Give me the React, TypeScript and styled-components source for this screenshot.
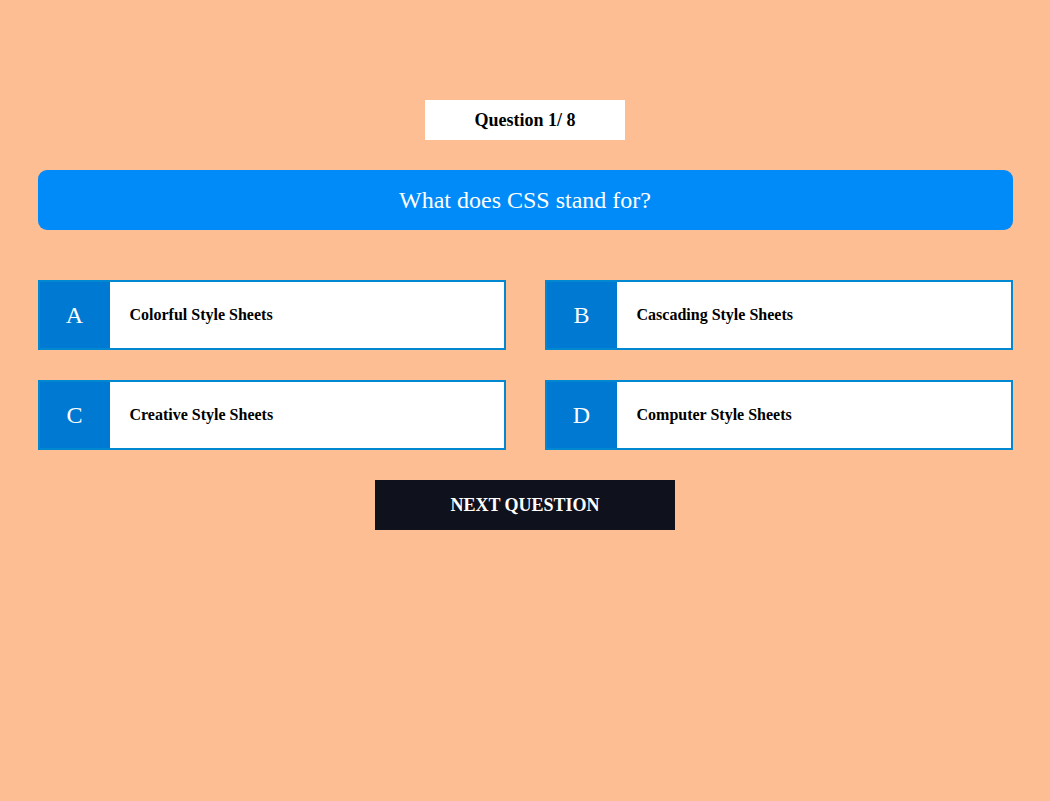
import React from "react";
import styled, { createGlobalStyle } from "styled-components";

const GlobalStyle = createGlobalStyle`
  html, body {
    margin: 0;
    padding: 0;
    background: #fdbe94;
    font-family: "Liberation Serif", "Times New Roman", serif;
  }
`;

const Page = styled.div`
  min-height: 801px;
  background: #fdbe94;
  padding-top: 100px;
  box-sizing: border-box;
`;

const Quiz = styled.div`
  width: 975px;
  margin: 0 auto;
  display: flex;
  flex-direction: column;
  align-items: center;
`;

const Counter = styled.div`
  width: 200px;
  height: 40px;
  background: #ffffff;
  display: flex;
  align-items: center;
  justify-content: center;
  font-size: 18px;
  font-weight: bold;
  color: #000;
`;

const QuestionBox = styled.div`
  margin-top: 30px;
  width: 100%;
  height: 60px;
  background: #008bf9;
  border-radius: 9px;
  color: #fff;
  font-size: 24px;
  display: flex;
  align-items: center;
  justify-content: center;
`;

const Options = styled.div`
  margin-top: 50px;
  width: 100%;
  display: grid;
  grid-template-columns: 1fr 1fr;
  column-gap: 39px;
  row-gap: 30px;
`;

const Option = styled.button`
  display: flex;
  align-items: stretch;
  height: 70px;
  padding: 0;
  border: 2px solid #0288d1;
  background: #fff;
  cursor: pointer;
  font-family: inherit;
  text-align: left;
`;

const Letter = styled.span`
  width: 70px;
  background: #0079d2;
  color: #fff;
  font-size: 24px;
  display: flex;
  align-items: center;
  justify-content: center;
`;

const Label = styled.span`
  padding-left: 20px;
  display: flex;
  align-items: center;
  font-size: 16px;
  font-weight: bold;
  color: #000;
`;

const NextButton = styled.button`
  margin-top: 30px;
  width: 300px;
  height: 50px;
  border: none;
  background: #0f111c;
  color: #fff;
  font-family: inherit;
  font-size: 18px;
  font-weight: bold;
  cursor: pointer;
`;

const options = [
  { key: "A", text: "Colorful Style Sheets" },
  { key: "B", text: "Cascading Style Sheets" },
  { key: "C", text: "Creative Style Sheets" },
  { key: "D", text: "Computer Style Sheets" },
];

export default function App() {
  return (
    <Page>
      <GlobalStyle />
      <Quiz>
        <Counter>Question 1/ 8</Counter>
        <QuestionBox>What does CSS stand for?</QuestionBox>
        <Options>
          {options.map((o) => (
            <Option key={o.key}>
              <Letter>{o.key}</Letter>
              <Label>{o.text}</Label>
            </Option>
          ))}
        </Options>
        <NextButton>NEXT QUESTION</NextButton>
      </Quiz>
    </Page>
  );
}
